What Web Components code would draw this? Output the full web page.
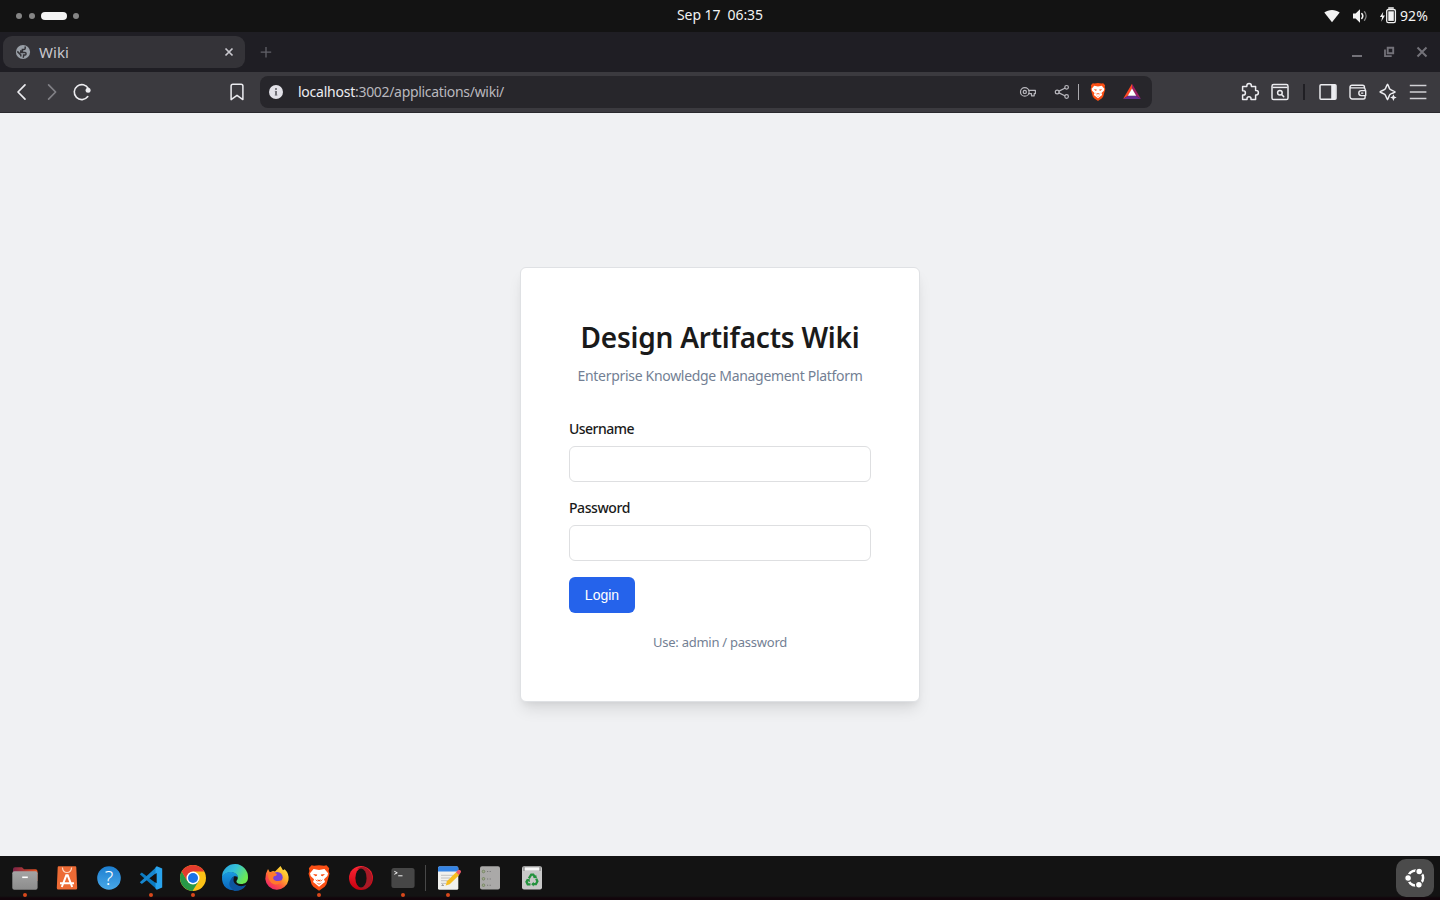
<!DOCTYPE html>
<html lang="en">
<head>
<meta charset="utf-8">
<title>Wiki</title>
<style>
html,body{margin:0;height:100%;overflow:hidden;background:#131313}
body{font-family:"Noto Sans","Open Sans",sans-serif}
</style>
</head>
<body>
<desktop-screen></desktop-screen>
<script>
const define = (name, html, setup) => {
  const t = document.createElement('template');
  t.innerHTML = html;
  customElements.define(name, class extends HTMLElement {
    constructor() {
      super();
      this.attachShadow({ mode: 'open' }).append(t.content.cloneNode(true));
    }
    connectedCallback() { if (setup) setup.call(this, this.shadowRoot); }
  });
};

/* Single line of text whose tracking is adjusted to a given advance width. */
define('fit-text', `<style>
:host{display:block;white-space:pre;flex:none}
span{display:inline-block}
</style><span><slot></slot></span>`, function (root) {
  const w = +this.getAttribute('width');
  const s = root.querySelector('span');
  const n = this.textContent.length;
  this.style.width = w + 'px';
  s.style.letterSpacing = ((w - s.getBoundingClientRect().width) / n) + 'px';
});

const S = 'fill="none" stroke="currentColor" stroke-linecap="round" stroke-linejoin="round"';
const lion = `<path d="M11 .8 15.4 1.3 17.6 .9 20 3.6 19.5 6.2 20.3 8.6 17.6 18.3 16 20.8 11 24.3 6 20.8 4.4 18.3 1.7 8.6 2.5 6.2 2 3.6 4.4 .9 6.6 1.3Z" fill="#fb4f14"/>
<path d="M11 5.1 15.8 4.2 19 8.3 18.4 10.7 15.4 13.8 16.3 16.3 14.2 18 11 20.6 7.8 18 5.7 16.3 6.6 13.8 3.6 10.7 3 8.3 6.2 4.2Z" fill="#fff"/>
<path d="M5.7 8.9 9.4 9.3 9.1 10.5 7.8 11ZM16.3 8.9 12.6 9.3 12.9 10.5 14.2 11ZM9.4 13.9 11 14.4 12.6 13.9 12.2 15.2 11 15.8 9.8 15.2ZM8.4 16.8 11 18 13.600 16.800 11 18.9Z" fill="#fb4f14"/>
<path d="M8 14.2l1.6 1.5M14 14.2l-1.6 1.5" stroke="#fb4f14" stroke-width=".7"/>`;

/* 24x24 interface icons */
const icons = {
  globe: `<circle cx="12" cy="12" r="7.1" fill="#9aa0a8"/><path d="M14.2 6.4v1.8q0 1.300-1.300 1.300h-1.500v1.600h-1.600v1.400h4.200q1 0 1 1v.6q0 .8-.8.8h-1.600v1.400q0 1-.9 1.200" fill="none" stroke="#343338" stroke-width="1.500"/><path d="M6.300 11.400 9.800 14.900v1.600" fill="none" stroke="#343338" stroke-width="1.500"/>`,
  close: `<path d="M8.500 8.500l7 7M15.500 8.500l-7 7" fill="none" stroke="currentColor" stroke-width="1.700"/>`,
  plus: `<path d="M12 7v10.500M6.700 12.200h10.500" fill="none" stroke="currentColor" stroke-width="1.300"/>`,
  min: `<path d="M7 16h10" stroke="currentColor" stroke-width="2"/>`,
  max: `<path d="M10.700 7.800h5.500v5.500h-5.500z" fill="none" stroke="currentColor" stroke-width="1.900"/><path d="M8 9.500v6.700h6.700" fill="none" stroke="currentColor" stroke-width="1.800"/>`,
  quit: `<path d="M7.500 7.500l9 9M16.500 7.500l-9 9" stroke="currentColor" stroke-width="2"/>`,
  back: `<path d="M15 4.800 8 12l7 7.200" ${S} stroke-width="1.700"/>`,
  fwd: `<path d="M8.600 4.800 15.600 12l-7 7.200" ${S} stroke-width="1.700"/>`,
  reload: `<path d="M18.400 8.600A7.500 7.500 0 1 0 17.800 16.600" ${S} stroke-width="1.600"/><circle cx="18.100" cy="10.200" r="2.500" fill="currentColor"/>`,
  mark: `<path d="M7.900 4.300h8.200a1.800 1.800 0 0 1 1.800 1.800v13.500l-5.900-4.300-5.900 4.300V6.100a1.800 1.800 0 0 1 1.800-1.800Z" ${S} stroke-width="1.500"/>`,
  info: `<circle cx="12" cy="12" r="7" fill="#e2e1e8"/><circle cx="12" cy="9" r=".95" fill="#55545a"/><path d="M12 11v4.200" fill="none" stroke="#55545a" stroke-width="1.600"/><path d="M10.800 11.300h1M10.700 15.100h2.700" stroke="#77767c" stroke-width=".8"/>`,
  key: `<circle cx="8.800" cy="11.900" r="4.300" ${S} stroke-width="1.200"/><circle cx="8.800" cy="11.900" r="1.600" ${S} stroke-width="1.200"/><path d="M12.700 10.300h6.700v3.300h-1.200v2.200h-2.700v-2.200h-2.800" ${S} stroke-width="1.200"/>`,
  share: `<g ${S} stroke-width="1.200"><circle cx="7.200" cy="12" r="1.900"/><circle cx="16.600" cy="7.300" r="1.800"/><circle cx="16.600" cy="16.500" r="1.800"/><path d="m9 11.100 5.800-2.900M9 12.900l5.800 2.800"/></g>`,
  brave: `<g transform="translate(3.300 2.500) scale(.79 .76)">${lion}</g>`,
  bat: `<path d="M12 3.800 3.200 18.800 8.100 15.800 12 9Z" fill="#ff4724"/><path d="M12 3.800 20.800 18.800 15.900 15.800 12 9Z" fill="#9e1f63"/><path d="M3 19 8.100 15.800h7.800L21 19Z" fill="#662d91"/><path d="M12 8.500 7.800 15.800h8.400Z" fill="#fff"/>`,
  ext: `<path d="M5 6.400h3.800v-.5a2.300 2.300 0 0 1 4.600 0v.5h4.200v4.100h.6a2.200 2.200 0 0 1 0 4.400h-.6v4.600H13v-.7a2 2 0 0 0-4 0v.7H4.600V15h.7a2.100 2.100 0 0 0 0-4.200h-.7V6.400Z" ${S} stroke-width="1.500"/>`,
  find: `<rect x="4" y="4.600" width="16" height="15" rx="1.600" ${S} stroke-width="1.500"/><path d="M4.500 7.400h15" stroke="currentColor" stroke-width="1.500"/><circle cx="11.900" cy="12.700" r="2.300" ${S} stroke-width="1.500"/><path d="m13.800 14.700 1.900 1.900" ${S} stroke-width="1.500"/>`,
  side: `<rect x="4" y="4.700" width="16" height="14.600" rx="1" ${S} stroke-width="1.500"/><path d="M15.200 5h4.600v14h-4.600z" fill="currentColor"/>`,
  wallet: `<path d="M4 7.200a2 2 0 0 1 2-2h10.500a2 2 0 0 1 2 2M4 7.200v9.600a2.200 2.200 0 0 0 2.200 2.200h11.100a1.800 1.800 0 0 0 1.800-1.800v-1.600M4.300 7.900H17.500a1.700 1.700 0 0 1 1.700 1.700v1M19.700 10.600h-4.400a2.500 2.500 0 0 0 0 5h4.400ZM15.600 13.100h1.200" ${S} stroke-width="1.400"/>`,
  spark: `<path d="M11.500 4.200c.5 0 1.400 4 2.500 5.100s5.200 2 5.200 2.600-4.100 1.500-5.200 2.600-2 5.200-2.500 5.200-1.500-4.100-2.600-5.200-4.900-2-4.900-2.600 3.800-1.500 4.900-2.600 2-5.100 2.600-5.100Z" ${S} stroke-width="1.500"/><path d="M17.400 14.300v6.600M14.100 17.600h6.600" stroke="#3b3a3f" stroke-width="4"/><path d="M17.400 14.300 18.400 16.600 20.700 17.600 18.400 18.600 17.400 20.900 16.400 18.600 14.100 17.600 16.400 16.600Z" fill="currentColor"/>`,
  menu: `<path d="M3.800 5.500h16.600M3.800 12h16.600M3.800 18.500h16.600" stroke="currentColor" stroke-width="1.700" opacity=".85"/>`,
  wifi: `<path d="M4.300 8.600C8.600 5 15.400 5 19.700 8.600L12 18.200Z" fill="currentColor"/>`,
  sound: `<path d="M5 9.400h2.600L12 5.200v13.600l-4.400-4.200H5Z" fill="currentColor"/><path d="M13.800 9.500a4 4 0 0 1 0 5" ${S} stroke-width="1.500"/><path d="M16.500 7.800a6.500 6.500 0 0 1 0 8.400" ${S} stroke-width="1.400" opacity=".5"/>`,
  battery: `<path d="M7.300 7.800 3.900 13h2.200l-.9 4.800L8.900 11.600H6.600Z" fill="currentColor"/><path d="M13 4.800V4h4v.8" fill="none" stroke="currentColor" stroke-width="1.500"/><rect x="10.700" y="5.500" width="8.700" height="13.200" rx="1.600" fill="none" stroke="currentColor" stroke-width="1.300"/><path d="M12.300 7.300h5.500v9.600h-5.500z" fill="currentColor"/>`,
  ubuntu: `<circle cx="12.600" cy="12" r="7.500" fill="none" stroke="#fff" stroke-width="2.500"/><g fill="#fff" stroke="#4b4b4b" stroke-width="1.300"><circle cx="5.100" cy="12" r="3.400"/><circle cx="16.200" cy="5.600" r="3.400"/><circle cx="15.900" cy="18.700" r="3.400"/></g>`
};
define('ui-icon', `<style>
:host{display:flex;flex:none;width:24px;height:24px}
svg{display:block;width:24px;height:24px}
</style><svg viewBox="0 0 24 24"></svg>`, function (r) {
  r.querySelector('svg').innerHTML = icons[this.getAttribute('name')];
});

/* 42x44 launcher artwork */
const apps = {
  files: `<defs><linearGradient id="f"><stop stop-color="#7c2348"/><stop offset="1" stop-color="#e95420"/></linearGradient><linearGradient id="g" x2="0" y2="1"><stop stop-color="#a4a4a4"/><stop offset="1" stop-color="#8c8c8c"/></linearGradient></defs><path d="M9 13.300q0-2 2-2h7l2 2h11.500q2 0 2 2V25H9Z" fill="url(#f)"/><rect x="8.300" y="15.300" width="25.300" height="18.500" rx="2" fill="url(#g)"/><path d="M18.200 21.300h5.600" stroke="#fff" stroke-width="1.600"/>`,
  store: `<path d="M12.700 10.300h16.600q1 0 1 1l.9 20.700q0 1.500-1.500 1.500H12.300q-1.500 0-1.500-1.500l.9-20.700q0-1 1-1Z" fill="#ed6b35"/><path d="M16.400 11.500q.4 5 4.600 5t4.600-5" fill="none" stroke="#ffd9c5" stroke-width="1.200"/><path d="M15.800 31 20.300 19.300h1.400L26.200 31M14 27.300h14" fill="none" stroke="#fff" stroke-width="2"/>`,
  help: `<defs><linearGradient id="h" x2="0" y2="1"><stop stop-color="#1c7ed0"/><stop offset="1" stop-color="#49a8e8"/></linearGradient></defs><circle cx="21" cy="22" r="11.800" fill="url(#h)"/><text x="21" y="29" text-anchor="middle" font-family="Noto Sans, sans-serif" font-size="20" font-weight="300" fill="#fff">?</text>`,
  code: `<path d="m9.800 18.200 2-1.700L27 28v5.500Z" fill="#0b7bc1"/><path d="m9.800 26.200 2 1.700L27 16.400v-5.900Z" fill="#1787cf"/><path d="M26.800 10.200 32.200 12.500V31.600L26.800 33.800 25.500 32.500V11.500Z" fill="#29a4ee"/><path d="M26.700 17 20.500 22.200l6.200 5Z" fill="#131313"/>`,
  chrome: `<circle cx="21" cy="22" r="13" fill="#fbc116"/><path d="M9.740 15.500A13 13 0 0 0 20.500 35L26.600 25.300 21 22 15.400 25.200Z" fill="#279847"/><path d="M9.740 15.500A13 13 0 0 1 32.260 15.500H21L15.200 25Z" fill="#e33b2e"/><circle cx="21" cy="22" r="6.500" fill="#fff"/><circle cx="21" cy="22" r="5" fill="#1a73e8"/>`,
  edge: `<defs><linearGradient id="e" x2="1" y2=".5"><stop stop-color="#249fe0"/><stop offset=".5" stop-color="#35c1d8"/><stop offset="1" stop-color="#6bea52"/></linearGradient><linearGradient id="e2" x2="0" y2="1"><stop stop-color="#199be1"/><stop offset="1" stop-color="#0a63ba"/></linearGradient></defs><path d="M8 20.500A13 13 0 0 1 34 21.500c0 4.500-3 6.500-7 6.500-3.500 0-5-1.500-4.500-3Q26 20 20.500 17 14 14.500 8 20.500Z" fill="url(#e)"/><path d="M8 20.500Q11.500 15.200 17.800 16q5.700.8 6.400 5.800-.5-2-4-1.500c-4.400 2-4.400 9.200 3.800 13.400Q12 36.200 8.800 27 7.800 24 8 20.500Z" fill="url(#e2)"/><path d="M18.200 21.500Q11.500 29.500 20.500 35 28.500 35 32.300 29q-6 2.500-10.200-.5-4-3-2-7.500Z" fill="#0d559f"/>`,
  firefox: `<defs><linearGradient id="x" x1="1" x2=".2" y2="1"><stop stop-color="#fff04a"/><stop offset=".4" stop-color="#ffb52a"/><stop offset=".7" stop-color="#ff553f"/><stop offset="1" stop-color="#e91f72"/></linearGradient></defs><path d="M10 17.500 12 13l1.800 3.300 3.200-1.200 2 .4L24.500 10l2.500 4.200 1.700-1q4.700 4.500 3.800 10.700A11.700 11.700 0 0 1 9.300 23Z" fill="url(#x)"/><circle cx="21.300" cy="21.300" r="5.400" fill="#7843d8"/><path d="M12 17q4.500-2.300 7.500.3l1.500.9q-.5 1.800-3 2-1.800 2.200.4 4 4.500 2 7.600-.5-2 5.600-8 4.500Q11.500 26 12 17Z" fill="#ff7a2c"/>`,
  brave: `<g transform="translate(8.600 8.400) scale(1.130 1.080)">${lion}</g>`,
  opera: `<defs><linearGradient id="o" x2="0" y2="1"><stop stop-color="#ff2634"/><stop offset="1" stop-color="#c4000f"/></linearGradient></defs><circle cx="21" cy="22" r="12" fill="url(#o)"/><path d="M17 13q4-3 8-1.800a12 12 0 0 1 3 20q-4.500 3-10.500 0 8 0 9-9Q26 13 17 13Z" fill="#a81a26"/><ellipse cx="21" cy="22" rx="5.600" ry="9.400" fill="#131313"/>`,
  term: `<rect x="9.400" y="12" width="23.200" height="20" rx="2.500" fill="#464646"/><path d="m12.300 15.300 3 1.500-3 1.500M16.200 19.800h4.300" fill="none" stroke="#eee" stroke-width="1"/>`,
  edit: `<rect x="11" y="10.500" width="20.300" height="23.200" rx="1.500" fill="#f1f1ee"/><path d="M11 15.600V12q0-1.700 1.700-1.700h17q1.600 0 1.600 1.700v3.600Z" fill="#3584e4"/><path d="M14 19.300h12M14 22h9M14 24.700h7M14 27.400h5" stroke="#b5b5b5" stroke-width=".8"/><path d="m19.900 25.300 9.600-9.600 3 3-9.800 9.500-4 1.300Z" fill="#f6bd20"/><path d="m29 16.200 2-2.200q1.200-.8 2.400.3t.3 2.500L31.900 18.900Z" fill="#e9596a"/><path d="m14.800 30 .9-1.400.8 1.400" fill="none" stroke="#555" stroke-width=".7"/>`,
  todo: `<rect x="11" y="10.300" width="20" height="23.300" rx="2" fill="#aaa9a8"/><g fill="#a1ad8d" stroke="#6f7d5c" stroke-width=".8"><circle cx="14.500" cy="15.500" r="1.300"/><circle cx="14.500" cy="22.800" r="1.300"/><circle cx="14.500" cy="29.200" r="1.300"/></g><path d="M18 15.500h1.200m1.400 0h1.200M18 23h1.200m1.400 0h1.200M18 29.300h1.200m1.400 0h1.200" stroke="#777" stroke-width="1.100"/>`,
  trash: `<rect x="11" y="10.300" width="20" height="23.300" rx="2" fill="#c8c8c8"/><path d="M13.200 11.700h15.600v2.600H13.200Z" fill="#f6f6f6"/><path d="M13 11v4M29 11v4" stroke="#777" stroke-width="1"/><g fill="none" stroke="#23923d" stroke-width="2.300"><path d="m17.900 22.300 2.300-3.600h2.100l1.500 2.400M25.200 22.800l1.200 2.500-1.500 2.900h-3M19.500 28.300h-2.800l-1.200-2.600 1.400-2.500"/></g><path d="m22.100 21.900 3.900.4-.9-3.600ZM22.700 25.700v4.800l-2.500-2.300ZM15 24.500l3.500-2 .5 3.500Z" fill="#23923d"/>`
};
define('dock-item', `<style>
:host{display:flex;flex:none;width:42px;height:44px;position:relative}
svg{width:42px;height:44px;display:block}
i{display:none;position:absolute;left:19px;top:37px;width:4px;height:4px;border-radius:50%;background:#d9481c}
:host([running]) i{display:block}
</style><svg viewBox="0 0 42 44"></svg><i></i>`, function (r) {
  r.querySelector('svg').innerHTML = apps[this.getAttribute('app')];
});

define('top-panel', `<style>
:host{display:grid;grid-template-columns:1fr auto 1fr;align-items:center;height:32px;background:#131313;color:#f2f2f2;font-size:14px;line-height:20px}
.ws{display:flex;align-items:center;gap:7px;padding-left:16px}
.ws i{width:6px;height:6px;border-radius:3px;background:#858585}
.ws i.on{width:26px;height:8px;border-radius:4px;background:#f4f4f4;margin:0 -1px}
.st{display:flex;align-items:center;justify-content:flex-end;padding-right:12px}
.st ui-icon+ui-icon{margin-left:4px}
.clock{position:relative;top:-1px}
</style>
<div class="ws"><i></i><i></i><i class="on"></i><i></i></div>
<fit-text class="clock" width="86">Sep 17  06:35</fit-text>
<div class="st"><ui-icon name="wifi"></ui-icon><ui-icon name="sound"></ui-icon><ui-icon name="battery"></ui-icon><fit-text width="28">92%</fit-text></div>`);

define('tab-strip', `<style>
:host{display:flex;align-items:center;height:40px;background:#1f1e24;padding:0 6px 0 3px}
.tab{display:flex;align-items:center;width:242px;height:32px;border-radius:9px;background:#343338;color:#c9c8ce;box-sizing:border-box;padding:0 4px 0 8px;font-size:15px;line-height:20px}
.tab fit-text{margin-left:4px}
.tab .x{margin-left:auto}
.plus{margin-left:9px;color:#626168}
.win{margin-left:auto;display:flex;color:#737279;gap:9px}
.win :first-child{margin-right:-1px}
</style>
<div class="tab"><ui-icon name="globe"></ui-icon><fit-text width="30">Wiki</fit-text><ui-icon class="x" name="close"></ui-icon></div>
<ui-icon class="plus" name="plus"></ui-icon>
<div class="win"><ui-icon name="min"></ui-icon><ui-icon name="max"></ui-icon><ui-icon name="quit"></ui-icon></div>`);

define('address-bar', `<style>
:host{display:flex;align-items:center;flex:none;width:892px;height:32px;border-radius:8px;background:#27262b;box-sizing:border-box;padding:0 8px 0 4px;color:#b9b8be;font-size:14px;line-height:20px}
.host{margin-left:10px;color:#ececf1}
.key{margin-left:auto}
.share{margin-left:10px}
.sep{width:1px;height:16px;background:#aaa9ae;margin:0 7px 0 4px}
.bat{margin-left:10px}
</style>
<ui-icon name="info"></ui-icon>
<fit-text class="host" width="57">localhost</fit-text><fit-text width="149">:3002/applications/wiki/</fit-text>
<ui-icon class="key" name="key"></ui-icon><ui-icon class="share" name="share"></ui-icon><span class="sep"></span><ui-icon name="brave"></ui-icon><ui-icon class="bat" name="bat"></ui-icon>`);

define('nav-bar', `<style>
:host{display:flex;align-items:center;height:41px;box-sizing:border-box;border-bottom:1px solid #2a292e;background:#3b3a3f;color:#ececf0;padding:0 10px}
.g{display:flex;gap:6px}
.dim{color:#818086}
.mark{margin:0 11px 0 auto}
.right{margin-left:86px;align-items:center}
.sep{width:2px;height:16px;background:#201f24;margin:0 5px}
</style>
<div class="g"><ui-icon name="back"></ui-icon><ui-icon class="dim" name="fwd"></ui-icon><ui-icon name="reload"></ui-icon></div>
<ui-icon class="mark" name="mark"></ui-icon>
<address-bar></address-bar>
<div class="g right"><ui-icon name="ext"></ui-icon><ui-icon name="find"></ui-icon><span class="sep"></span><ui-icon name="side"></ui-icon><ui-icon name="wallet"></ui-icon><ui-icon name="spark"></ui-icon><ui-icon name="menu"></ui-icon></div>`);

define('form-field', `<style>
:host{display:block;margin-bottom:16px}
label{display:block;font-size:14px;line-height:19px;font-weight:500;color:#1a1a1a;margin-bottom:8px}
input{display:block;width:100%;height:36px;box-sizing:border-box;border:1px solid #dedfe1;border-radius:6px;background:#fff;padding:8px 12px;outline:0}
</style><label><slot></slot></label><input>`, function (r) {
  r.querySelector('input').type = this.getAttribute('type');
});

define('login-card', `<style>
:host{display:block;box-sizing:border-box;width:400px;height:435px;padding:48px;border:1px solid #dfe1e4;border-radius:6px;background:#fff;box-shadow:0 10px 15px -3px rgba(0,0,0,.1),0 4px 6px -2px rgba(0,0,0,.05)}
h1{margin:0;display:flex;justify-content:center;font-size:28px;line-height:42px;font-weight:600;color:#1a1a1a}
.sub{display:flex;justify-content:center;margin-top:7px;font-size:14px;line-height:21px;color:#737f94}
form{margin-top:33px}
button{display:block;width:66px;height:36px;border:0;border-radius:6px;background:#2563eb;color:#fff;font:14px/20px "Liberation Sans",sans-serif;padding:0}
.hint{display:flex;justify-content:center;margin-top:20px;font-size:13px;line-height:19px;color:#737f94}
</style>
<h1><fit-text width="279">Design Artifacts Wiki</fit-text></h1>
<div class="sub"><fit-text width="285">Enterprise Knowledge Management Platform</fit-text></div>
<form><form-field type="text"><fit-text width="65">Username</fit-text></form-field>
<form-field type="password"><fit-text width="61">Password</fit-text></form-field>
<button type="button">Login</button></form>
<div class="hint"><fit-text width="134">Use: admin / password</fit-text></div>`);

define('app-dock', `<style>
:host{display:flex;height:44px;box-sizing:border-box;background:linear-gradient(#131313 0 40px,#12050b 42px);padding:0 6px 0 4px}
.sep{width:1px;height:26px;background:#484848;margin:9px 1px 0}
.apps{width:38px;height:38px;margin:3px 0 0 auto;border-radius:10px;background:#4b4b4b;display:flex;align-items:center;justify-content:center}
</style>
<dock-item app="files" running></dock-item><dock-item app="store"></dock-item><dock-item app="help"></dock-item><dock-item app="code" running></dock-item><dock-item app="chrome" running></dock-item><dock-item app="edge"></dock-item><dock-item app="firefox"></dock-item><dock-item app="brave" running></dock-item><dock-item app="opera"></dock-item><dock-item app="term" running></dock-item>
<span class="sep"></span>
<dock-item app="edit" running></dock-item><dock-item app="todo"></dock-item><dock-item app="trash"></dock-item>
<div class="apps"><ui-icon name="ubuntu"></ui-icon></div>`);

define('desktop-screen', `<style>
:host{display:grid;grid-template-rows:32px 40px 41px 1fr 44px;height:100vh}
main{display:flex;align-items:center;justify-content:center;background:#f0f1f3}
</style>
<top-panel></top-panel><tab-strip></tab-strip><nav-bar></nav-bar>
<main><login-card></login-card></main>
<app-dock></app-dock>`);
</script>
</body>
</html>
